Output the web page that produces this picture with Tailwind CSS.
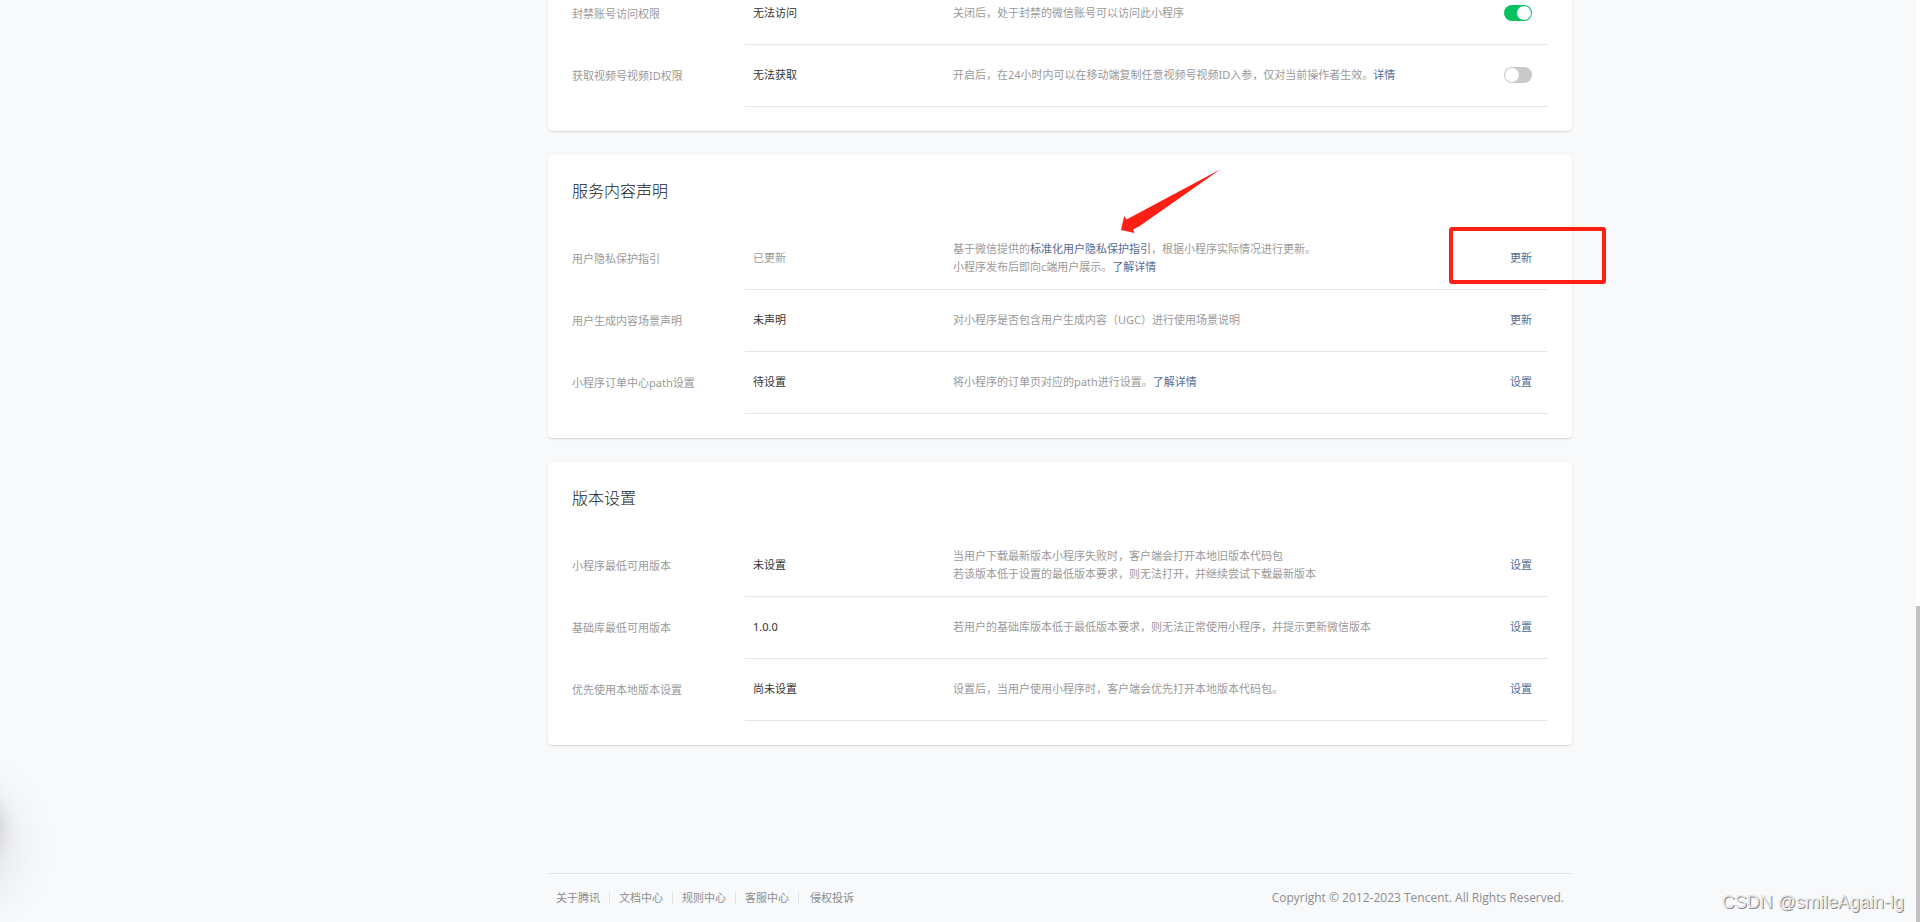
<!DOCTYPE html>
<html lang="zh-CN">
<head>
<meta charset="utf-8">
<meta name="viewport" content="width=device-width, initial-scale=1">
<title>小程序设置</title>
<script src="https://cdn.jsdelivr.net/npm/@tailwindcss/browser@4"></script>
</head>
<body class="relative flex min-h-screen flex-col overflow-hidden bg-[#f8f9fb] pr-1 pl-[204px] font-['Noto_Sans','Noto_Sans_CJK_SC',sans-serif] text-[11px] leading-[18px] text-[#9a9a9a]">

<main class="mx-auto flex w-full max-w-[1024px] flex-col gap-6">

  <section class="-mt-[17px] rounded-sm bg-white px-6 pb-6 shadow-[0_1px_2px_rgba(0,0,0,0.15)]">
    <table class="w-full table-fixed border-separate border-spacing-0 text-left [&_td]:pb-0.5">
      <colgroup><col class="w-[173px]"><col class="w-[200px]"><col><col class="w-24"></colgroup>
      <tbody>
        <tr class="h-[62px]">
          <th scope="row" class="pb-px font-normal">封禁账号访问权限</th>
          <td class="border-b border-[#e6e6e6] pl-2 text-[#353535]">无法访问</td>
          <td class="border-b border-[#e6e6e6] pl-2">关闭后，处于封禁的微信账号可以访问此小程序</td>
          <td class="border-b border-[#e6e6e6] pr-4">
            <input type="checkbox" checked aria-label="封禁账号访问权限" class="ml-auto block h-4 w-7 appearance-none rounded-full bg-[#c9c9c9] p-px before:block before:size-3.5 before:rounded-full before:bg-white checked:bg-[#07c160] checked:before:ml-3">
          </td>
        </tr>
        <tr class="h-[62px]">
          <th scope="row" class="pb-px font-normal">获取视频号视频ID权限</th>
          <td class="border-b border-[#e6e6e6] pl-2 text-[#353535]">无法获取</td>
          <td class="border-b border-[#e6e6e6] pl-2">开启后，在24小时内可以在移动端复制任意视频号视频ID入参，仅对当前操作者生效。<a href="#" class="text-[#576b95]">详情</a></td>
          <td class="border-b border-[#e6e6e6] pr-4">
            <input type="checkbox" aria-label="获取视频号视频ID权限" class="ml-auto block h-4 w-7 appearance-none rounded-full bg-[#c9c9c9] p-px before:block before:size-3.5 before:rounded-full before:bg-white checked:bg-[#07c160] checked:before:ml-3">
          </td>
        </tr>
      </tbody>
    </table>
  </section>

  <section class="relative rounded-sm bg-white px-6 pb-6 shadow-[0_1px_2px_rgba(0,0,0,0.15)]">
    <h2 class="h-[73px] pt-6 text-base font-light text-[#222222]">服务内容声明</h2>
    <table class="w-full table-fixed border-separate border-spacing-0 text-left [&_td]:pb-0.5">
      <colgroup><col class="w-[173px]"><col class="w-[200px]"><col><col class="w-24"></colgroup>
      <tbody>
        <tr class="h-[62px]">
          <th scope="row" class="pb-px font-normal">用户隐私保护指引</th>
          <td class="border-b border-[#e6e6e6] pl-2">已更新</td>
          <td class="border-b border-[#e6e6e6] pl-2">基于微信提供的<a href="#" class="text-[#576b95]">标准化用户隐私保护指引</a>，根据小程序实际情况进行更新。<br>小程序发布后即向c端用户展示。<a href="#" class="text-[#576b95]">了解详情</a></td>
          <td class="border-b border-[#e6e6e6] pr-4 text-right"><a href="#" class="text-[#576b95]">更新</a></td>
        </tr>
        <tr class="h-[62px]">
          <th scope="row" class="pb-px font-normal">用户生成内容场景声明</th>
          <td class="border-b border-[#e6e6e6] pl-2 text-[#353535]">未声明</td>
          <td class="border-b border-[#e6e6e6] pl-2">对小程序是否包含用户生成内容（UGC）进行使用场景说明</td>
          <td class="border-b border-[#e6e6e6] pr-4 text-right"><a href="#" class="text-[#576b95]">更新</a></td>
        </tr>
        <tr class="h-[62px]">
          <th scope="row" class="pb-px font-normal">小程序订单中心path设置</th>
          <td class="border-b border-[#e6e6e6] pl-2 text-[#353535]">待设置</td>
          <td class="border-b border-[#e6e6e6] pl-2">将小程序的订单页对应的path进行设置。<a href="#" class="text-[#576b95]">了解详情</a></td>
          <td class="border-b border-[#e6e6e6] pr-4 text-right"><a href="#" class="text-[#576b95]">设置</a></td>
        </tr>
      </tbody>
    </table>
    <!-- Red annotations: arrow to the guideline link, frame round the update action -->
    <svg class="pointer-events-none absolute top-3.5 left-[573px] h-[65px] w-[100px]" viewBox="0 0 100 65" fill="#ff2015" aria-hidden="true"><path d="M99.5 0.3 5.5 50.5 3.2 47 0 61 13.5 64 12 60.5 18 57.5 58 29.5Z"/></svg>
    <div class="pointer-events-none absolute top-[72px] -right-[34px] h-[57px] w-[157px] rounded-[3px] border-4 border-[#ff2015]"></div>
  </section>

  <section class="rounded-sm bg-white px-6 pb-6 shadow-[0_1px_2px_rgba(0,0,0,0.15)]">
    <h2 class="h-[73px] pt-6 text-base font-light text-[#222222]">版本设置</h2>
    <table class="w-full table-fixed border-separate border-spacing-0 text-left [&_td]:pb-0.5">
      <colgroup><col class="w-[173px]"><col class="w-[200px]"><col><col class="w-24"></colgroup>
      <tbody>
        <tr class="h-[62px]">
          <th scope="row" class="pb-px font-normal">小程序最低可用版本</th>
          <td class="border-b border-[#e6e6e6] pl-2 text-[#353535]">未设置</td>
          <td class="border-b border-[#e6e6e6] pl-2">当用户下载最新版本小程序失败时，客户端会打开本地旧版本代码包<br>若该版本低于设置的最低版本要求，则无法打开，并继续尝试下载最新版本</td>
          <td class="border-b border-[#e6e6e6] pr-4 text-right"><a href="#" class="text-[#576b95]">设置</a></td>
        </tr>
        <tr class="h-[62px]">
          <th scope="row" class="pb-px font-normal">基础库最低可用版本</th>
          <td class="border-b border-[#e6e6e6] pl-2 text-[#353535]">1.0.0</td>
          <td class="border-b border-[#e6e6e6] pl-2">若用户的基础库版本低于最低版本要求，则无法正常使用小程序，并提示更新微信版本</td>
          <td class="border-b border-[#e6e6e6] pr-4 text-right"><a href="#" class="text-[#576b95]">设置</a></td>
        </tr>
        <tr class="h-[62px]">
          <th scope="row" class="pb-px font-normal">优先使用本地版本设置</th>
          <td class="border-b border-[#e6e6e6] pl-2 text-[#353535]">尚未设置</td>
          <td class="border-b border-[#e6e6e6] pl-2">设置后，当用户使用小程序时，客户端会优先打开本地版本代码包。</td>
          <td class="border-b border-[#e6e6e6] pr-4 text-right"><a href="#" class="text-[#576b95]">设置</a></td>
        </tr>
      </tbody>
    </table>
  </section>
</main>

<footer class="mx-auto mt-auto flex h-[49px] w-full max-w-[1024px] items-center justify-between border-t border-[#e4e5e7] px-2 text-[#8d8d8d]">
  <nav class="flex items-center gap-[9px]">
    <a href="#">关于腾讯</a><span class="h-3 w-px bg-[#e1e2e4]"></span>
    <a href="#">文档中心</a><span class="h-3 w-px bg-[#e1e2e4]"></span>
    <a href="#">规则中心</a><span class="h-3 w-px bg-[#e1e2e4]"></span>
    <a href="#">客服中心</a><span class="h-3 w-px bg-[#e1e2e4]"></span>
    <a href="#" class="pl-0.5">侵权投诉</a>
  </nav>
  <p class="font-['Open_Sans',sans-serif] text-xs">Copyright © 2012-2023 Tencent. All Rights Reserved.</p>
</footer>

<!-- Shadow of the floating widget docked past the left edge -->
<div class="absolute top-[786px] -left-20 size-20 rounded-full shadow-[0_20px_60px_rgba(0,0,0,0.18),0_0_20px_rgba(0,0,0,0.15)]"></div>

<!-- Scrollbar -->
<div class="absolute inset-y-0 right-0 flex w-1 flex-col justify-end bg-white"><div class="h-[316px] bg-[#c1c1c1]"></div></div>

<p class="absolute right-4 bottom-2 font-['Liberation_Sans',sans-serif] text-lg leading-6 text-[#e8e8e8] [text-shadow:1px_1px_0_#8a8a8a]">CSDN @smileAgain-lg</p>
</body>
</html>
